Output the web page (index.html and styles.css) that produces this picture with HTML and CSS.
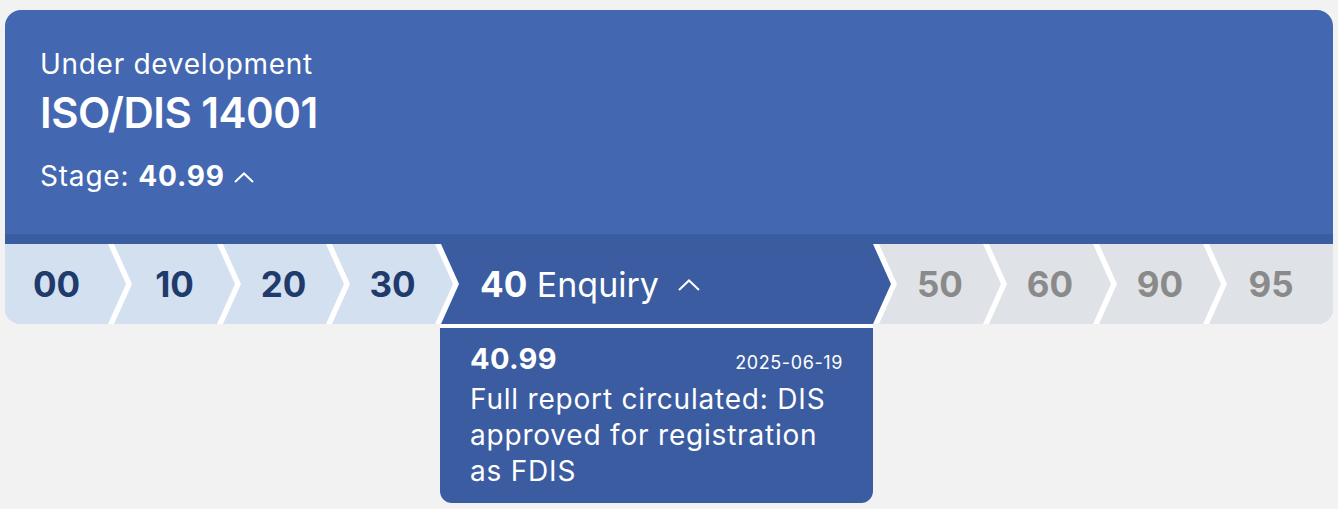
FILE: index.html
```html
<!DOCTYPE html>
<html lang="en">
<head>
    <meta charset="UTF-8">
    <meta name="viewport" content="width=device-width, initial-scale=1.0">
    <title>ISO/DIS 14001</title>
    <link rel="stylesheet" href="styles.css">
</head>
<body>
    <div class="card">
        <div class="head">
            <div class="status">Under development</div>
            <h1>ISO/DIS 14001</h1>
            <div class="stage">
                Stage: <b>40.99</b>
                <svg class="caret" width="20" height="11" viewBox="0 0 20 11"><path d="M1 10 L10 1.5 L19 10" fill="none" stroke="#fff" stroke-width="2"/></svg>
            </div>
        </div>
        <div class="bar"></div>
        <div class="stages">
            <div class="step past first">00</div>
            <div class="step past">10</div>
            <div class="step past">20</div>
            <div class="step past">30</div>
            <div class="step active">
                <b>40</b>&nbsp;Enquiry
                <svg class="caret big" width="22" height="12" viewBox="0 0 22 12"><path d="M1 11 L11 1.5 L21 11" fill="none" stroke="#fff" stroke-width="2"/></svg>
            </div>
            <div class="step future">50</div>
            <div class="step future">60</div>
            <div class="step future">90</div>
            <div class="step future last">95</div>
        </div>
    </div>
    <div class="detail">
        <div class="detail-top">
            <span class="code">40.99</span>
            <span class="date">2025-06-19</span>
        </div>
        <p>Full report circulated: DIS approved for registration as FDIS</p>
    </div>
</body>
</html>
```

FILE: styles.css
```css
body {
    margin: 0;
    padding: 10px 5px;
    background-color: #f2f2f2;
    font-family: Inter, "Noto Sans", sans-serif;
    color: white;
}
.card {
    background-color: #4368b1;
    border-radius: 16px;
    overflow: hidden;
}
.head {
    padding: 37px 35px 40px;
}
.status {
    font-size: 28px;
    line-height: 35px;
    letter-spacing: 0.7px;
}
h1 {
    margin: 6px 0 0;
    font-size: 42px;
    line-height: 50px;
    font-weight: 600;
    letter-spacing: -0.5px;
}
.stage {
    margin-top: 21px;
    font-size: 28px;
    line-height: 35px;
    letter-spacing: 0.8px;
    display: flex;
    align-items: center;
}
.stage b {
    margin-left: 9px;
}
.stage .caret {
    margin-left: 9px;
    margin-top: 2px;
}
.bar {
    height: 10px;
    background-color: #3a5da0;
}
.stages {
    display: flex;
    height: 80px;
    background-color: white;
}
.step {
    width: 121px;
    flex-shrink: 0;
    margin-left: -12px;
    padding: 0 18px;
    box-sizing: border-box;
    display: flex;
    align-items: center;
    justify-content: center;
    font-size: 35px;
    font-weight: 700;
    clip-path: polygon(0 0, calc(100% - 18px) 0, 100% 50%, calc(100% - 18px) 100%, 0 100%, 18px 50%);
}
.step.first {
    margin-left: 0;
    padding-left: 0;
    clip-path: polygon(0 0, calc(100% - 18px) 0, 100% 50%, calc(100% - 18px) 100%, 0 100%);
}
.step.last {
    flex: 1;
    clip-path: polygon(0 0, 100% 0, 100% 100%, 0 100%, 18px 50%);
}
.past {
    background-color: #d3e0ef;
    color: #203a6c;
}
.future {
    width: 122px;
    background-color: #dfe2e7;
    color: #8a8a8a;
}
.active {
    width: 450px;
    justify-content: flex-start;
    padding-left: 39px;
    background-color: #3b5ca0;
    color: white;
    font-size: 34px;
    font-weight: 400;
}
.active b {
    font-size: 35px;
    font-weight: 700;
}
.active .caret {
    margin-left: 19px;
    margin-top: 2px;
}
.detail {
    margin-left: 435px;
    width: 433px;
    box-sizing: border-box;
    border-top: 4px solid white;
    background-color: #3b5ca0;
    border-radius: 0 0 12px 12px;
    padding: 13px 30px 14px;
}
.detail-top {
    display: flex;
    justify-content: space-between;
    align-items: baseline;
}
.code {
    font-size: 29px;
    line-height: 36px;
    font-weight: 700;
    letter-spacing: 0.3px;
}
.date {
    font-size: 18px;
    letter-spacing: 0.6px;
}
.detail p {
    margin: 4px 0 0;
    font-size: 28px;
    line-height: 36px;
    letter-spacing: 0.8px;
}
```
